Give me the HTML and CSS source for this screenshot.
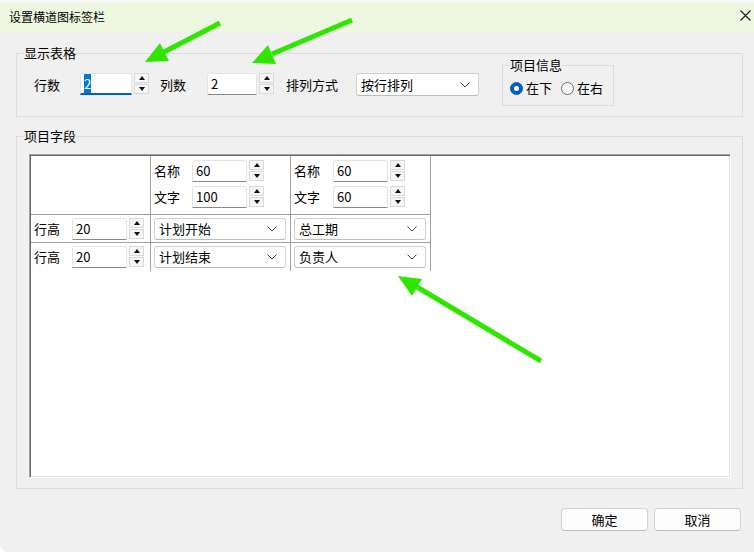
FILE: index.html
```html
<!DOCTYPE html>
<html lang="zh-CN">
<head>
    <meta charset="UTF-8">
    <title>设置横道图标签栏</title>
    <link rel="stylesheet" href="styles.css">
</head>
<body>

<div class="window">
    <div class="behind"></div>

    <div class="titlebar">
        <span class="title">设置横道图标签栏</span>
        <svg class="close" width="11" height="11" viewBox="0 0 11 11">
            <path d="M0.5 0.5 L10.5 10.5 M10.5 0.5 L0.5 10.5" stroke="#1b1b1b" stroke-width="1.1" fill="none"/>
        </svg>
    </div>

    <div class="dialog">
        <!-- 显示表格 -->
        <fieldset class="group group-table">
            <legend>显示表格</legend>
            <div class="table-row">
                <span class="lbl lbl-rows">行数</span>
                <div class="spin">
                    <div class="field focus w52"><span class="sel">2</span></div>
                    <div class="spin-btns"><span class="up"></span><span class="down"></span></div>
                </div>

                <span class="lbl lbl-cols">列数</span>
                <div class="spin">
                    <div class="field w50">2</div>
                    <div class="spin-btns"><span class="up"></span><span class="down"></span></div>
                </div>

                <span class="lbl lbl-order">排列方式</span>
                <div class="select w123">
                    <span>按行排列</span>
                    <svg class="chev" width="10" height="6" viewBox="0 0 10 6"><path d="M0.5 0.5 L5 5 L9.5 0.5" stroke="#444" fill="none"/></svg>
                </div>

                <fieldset class="group group-info">
                    <legend>项目信息</legend>
                    <div class="radios">
                        <label class="radio"><span class="dot on"></span>在下</label>
                        <label class="radio"><span class="dot"></span>在右</label>
                    </div>
                </fieldset>
            </div>
        </fieldset>

        <!-- 项目字段 -->
        <fieldset class="group group-fields">
            <legend>项目字段</legend>
            <div class="panel">
                <div class="grid">
                    <div class="cell head"></div>
                    <div class="cell head">
                        <div class="pair">
                            <span class="lbl w38">名称</span>
                            <div class="spin">
                                <div class="field w55">60</div>
                                <div class="spin-btns"><span class="up"></span><span class="down"></span></div>
                            </div>
                        </div>
                        <div class="pair">
                            <span class="lbl w38">文字</span>
                            <div class="spin">
                                <div class="field w55">100</div>
                                <div class="spin-btns"><span class="up"></span><span class="down"></span></div>
                            </div>
                        </div>
                    </div>
                    <div class="cell head">
                        <div class="pair">
                            <span class="lbl w39">名称</span>
                            <div class="spin">
                                <div class="field w55">60</div>
                                <div class="spin-btns"><span class="up"></span><span class="down"></span></div>
                            </div>
                        </div>
                        <div class="pair">
                            <span class="lbl w39">文字</span>
                            <div class="spin">
                                <div class="field w55">60</div>
                                <div class="spin-btns"><span class="up"></span><span class="down"></span></div>
                            </div>
                        </div>
                    </div>

                    <div class="cell">
                        <span class="lbl w38">行高</span>
                        <div class="spin">
                            <div class="field w55">20</div>
                            <div class="spin-btns"><span class="up"></span><span class="down"></span></div>
                        </div>
                    </div>
                    <div class="cell">
                        <div class="select w132">
                            <span>计划开始</span>
                            <svg class="chev" width="10" height="6" viewBox="0 0 10 6"><path d="M0.5 0.5 L5 5 L9.5 0.5" stroke="#444" fill="none"/></svg>
                        </div>
                    </div>
                    <div class="cell">
                        <div class="select w132">
                            <span>总工期</span>
                            <svg class="chev" width="10" height="6" viewBox="0 0 10 6"><path d="M0.5 0.5 L5 5 L9.5 0.5" stroke="#444" fill="none"/></svg>
                        </div>
                    </div>

                    <div class="cell last">
                        <span class="lbl w38">行高</span>
                        <div class="spin">
                            <div class="field w55">20</div>
                            <div class="spin-btns"><span class="up"></span><span class="down"></span></div>
                        </div>
                    </div>
                    <div class="cell last">
                        <div class="select w132">
                            <span>计划结束</span>
                            <svg class="chev" width="10" height="6" viewBox="0 0 10 6"><path d="M0.5 0.5 L5 5 L9.5 0.5" stroke="#444" fill="none"/></svg>
                        </div>
                    </div>
                    <div class="cell last">
                        <div class="select w132">
                            <span>负责人</span>
                            <svg class="chev" width="10" height="6" viewBox="0 0 10 6"><path d="M0.5 0.5 L5 5 L9.5 0.5" stroke="#444" fill="none"/></svg>
                        </div>
                    </div>
                </div>
            </div>
        </fieldset>

        <div class="buttons">
            <button class="btn">确定</button>
            <button class="btn">取消</button>
        </div>
    </div>

    <!-- annotation arrows drawn over the dialog -->
    <svg class="marks" width="754" height="552" viewBox="0 0 754 552">
        <g stroke="#2ee600" stroke-width="5" fill="#2ee600">
            <line x1="220" y1="23" x2="164" y2="52"/>
            <line x1="352" y1="20" x2="272" y2="54"/>
            <line x1="541" y1="361" x2="417" y2="287"/>
        </g>
        <g fill="#2ee600">
            <polygon points="145,62 169,61 160,43"/>
            <polygon points="252,63 276,64 268,45"/>
            <polygon points="398,276 422,279 412,296"/>
        </g>
    </svg>
</div>

</body>
</html>
```

FILE: styles.css
```css
/* Page and window frame */
html {
    background-color: #ffffff;
}

body {
    margin: 0;
    font-family: "Noto Sans CJK SC", "Noto Sans", sans-serif;
    font-size: 13px;
    color: #000;
}

.window {
    position: relative;
    width: 754px;
    height: 552px;
    overflow: hidden;
    background-color: #f0f0f0;
    border-bottom-left-radius: 8px;
}

.behind {
    height: 3px;
    background-color: #f7f7f7;
}

/* Title bar */
.titlebar {
    height: 29px;
    background-color: #eef8e0;
    display: flex;
    align-items: center;
    justify-content: space-between;
    padding: 0 3px 0 9px;
}

.title {
    font-size: 12px;
    line-height: 14px;
    margin-top: -2px;
}

.close {
    margin-top: -4px;
}

/* Dialog content */
.dialog {
    padding: 13px 11px 0 16px;
}

.group {
    margin: 0;
    border: 1px solid #dcdcdc;
    min-width: 0;
}

.group legend {
    padding: 0;
    line-height: 16px;
}

.group-table {
    padding: 0 7px 10px 7px;
}

.group-fields {
    margin-top: 11px;
    padding: 10px 11px 10px 12px;
}

.group-fields legend {
    margin-left: -5px;
}

/* Row of controls in 显示表格 */
.table-row {
    display: flex;
    align-items: flex-start;
    padding-left: 10px;
}

.table-row > .lbl,
.table-row > .spin,
.table-row > .select {
    margin-top: 12px;
}

.table-row > .lbl {
    margin-top: 13px;
}

.lbl {
    line-height: 22px;
    white-space: nowrap;
}

.lbl-rows { width: 46px; }
.lbl-cols { width: 47px; margin-left: 11px; }
.lbl-order { width: 70px; margin-left: 12px; }
.w38 { width: 38px; }
.w39 { width: 39px; }

/* Number field with spin buttons */
.spin {
    display: flex;
    align-items: flex-start;
    gap: 2px;
}

.field {
    box-sizing: border-box;
    height: 22px;
    background-color: #fff;
    border: 1px solid #e4e4e4;
    border-bottom-color: #8a8a8a;
    border-radius: 3px 3px 0 0;
    padding-left: 3px;
    line-height: 20px;
}

.field.focus {
    border-bottom: 2px solid #005fb8;
    line-height: 19px;
}

.sel {
    background-color: #0078d7;
    color: #fff;
}

.w50 { width: 50px; }
.w52 { width: 52px; }
.w55 { width: 55px; }

.spin-btns {
    display: flex;
    flex-direction: column;
    gap: 1px;
}

.spin-btns span {
    box-sizing: border-box;
    width: 15px;
    height: 10px;
    background-color: #f6f6f6;
    border: 1px solid #d9d9d9;
    display: flex;
    align-items: center;
    justify-content: center;
}

.spin-btns .up::after,
.spin-btns .down::after {
    content: "";
    border-left: 3px solid transparent;
    border-right: 3px solid transparent;
}

.spin-btns .up::after {
    border-bottom: 4px solid #111;
}

.spin-btns .down::after {
    border-top: 4px solid #111;
}

/* Drop down */
.select {
    box-sizing: border-box;
    height: 23px;
    background-color: #fff;
    border: 1px solid #d0d0d0;
    border-bottom-color: #bdbdbd;
    border-radius: 3px;
    display: flex;
    align-items: center;
    justify-content: space-between;
    padding: 0 8px 0 4px;
    line-height: 20px;
}

.w123 { width: 123px; }
.w132 { width: 132px; height: 22px; }

/* 项目信息 */
.group-info {
    box-sizing: border-box;
    width: 112px;
    margin-left: 23px;
    margin-top: -3px;
    padding: 0 7px 10px 7px;
}

.group-info legend {
    line-height: 14px;
}

.radios {
    display: flex;
    gap: 9px;
    margin-top: 9px;
}

.radio {
    display: flex;
    align-items: center;
    gap: 3px;
    line-height: 14px;
}

.dot {
    box-sizing: border-box;
    width: 13px;
    height: 13px;
    border-radius: 50%;
    border: 1px solid #6e6e6e;
    background-color: #f8f8f8;
}

.dot.on {
    background-color: #005fb8;
    border-color: #005fb8;
    display: flex;
    align-items: center;
    justify-content: center;
}

.dot.on::after {
    content: "";
    width: 5px;
    height: 5px;
    border-radius: 50%;
    background-color: #fff;
}

/* 项目字段 panel */
.panel {
    box-sizing: border-box;
    height: 324px;
    background-color: #fff;
    border: 1px solid;
    border-color: #a0a0a0 #ffffff #ffffff #a0a0a0;
    box-shadow: inset 1px 1px 0 #696969, inset -1px -1px 0 #e3e3e3;
    padding: 1px 0 0 1px;
}

.grid {
    display: grid;
    grid-template-columns: 120px 140px 140px;
    grid-template-rows: 59px 28px 28px;
    width: 400px;
}

.cell {
    box-sizing: border-box;
    border-right: 1px solid #a0a0a0;
    border-bottom: 1px solid #a0a0a0;
    padding: 0 3px;
    display: flex;
    align-items: center;
}

.cell.last {
    border-bottom: none;
}

.cell.head {
    flex-direction: column;
    align-items: flex-start;
    justify-content: flex-start;
    padding-top: 4px;
    gap: 4px;
}

.pair {
    display: flex;
    align-items: flex-start;
}

/* Buttons */
.buttons {
    display: flex;
    justify-content: flex-end;
    gap: 6px;
    margin-top: 19px;
    margin-right: 2px;
}

.btn {
    box-sizing: border-box;
    width: 87px;
    height: 23px;
    font-family: inherit;
    font-size: 13px;
    line-height: 20px;
    color: #000;
    background-color: #fdfdfd;
    border: 1px solid #d2d2d2;
    border-bottom-color: #bcbcbc;
    border-radius: 4px;
    padding: 0;
}

/* Overlay arrows */
.marks {
    position: absolute;
    left: 0;
    top: 0;
    pointer-events: none;
}
```
